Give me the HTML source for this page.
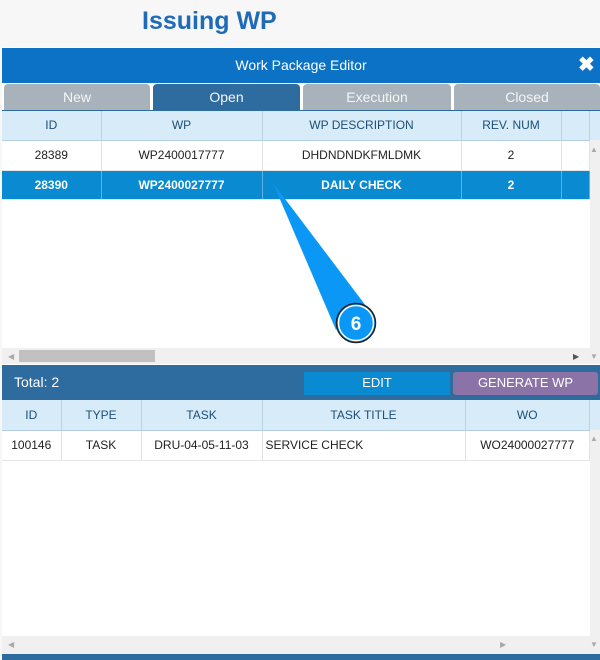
<!DOCTYPE html>
<html><head><style>
*{margin:0;padding:0;box-sizing:border-box}
body{width:600px;height:660px;background:#f7f7f7;font-family:"Liberation Sans",sans-serif;position:relative;overflow:hidden}
.a{position:absolute}
table{border-collapse:collapse;table-layout:fixed;position:absolute;font-size:12px}
td{text-align:center;border-right:1px solid #e2e2e2;border-bottom:1px solid #e6e6e6;color:#222}
th{font-weight:normal;color:#1d4f78;background:#d7ebf9;border-right:1px solid #bcd3e4;border-bottom:1px solid #b5cfe2;font-size:12px}
.sel td{background:#0a8ad0;color:#fff;font-weight:bold;border-right:1px solid #5fb2e0}
.tab{position:absolute;top:84px;height:26px;background:#a8b2ba;color:#f4f6f8;font-size:14px;text-align:center;line-height:27px;border-radius:4px 4px 0 0}
</style></head><body>
<div class="a" style="left:142px;top:7px;font-size:25px;font-weight:bold;color:#1f6bb8">Issuing WP</div>
<div class="a" style="left:2px;top:47px;width:598px;height:613px;background:#fff"></div>
<div class="a" style="left:2px;top:48px;width:598px;height:35px;background:#0b72c6;color:#fff;font-size:14px;text-align:center;line-height:35px">Work Package Editor</div>
<div class="a" style="left:578px;top:52px;color:#fff;font-size:20px;font-weight:bold">✖</div>
<div class="a" style="left:2px;top:83px;width:598px;height:28px;background:#fff"></div>
<div class="tab" style="left:4px;width:146px">New</div>
<div class="tab" style="left:153px;width:147px;background:#2e6c9f">Open</div>
<div class="tab" style="left:303px;width:148px">Execution</div>
<div class="tab" style="left:454px;width:146px">Closed</div>
<div class="a" style="left:2px;top:110px;width:598px;height:1px;background:#2e6c9f"></div>
<table style="left:2px;top:111px;width:588px">
<colgroup><col style="width:99px"><col style="width:161px"><col style="width:199px"><col style="width:100px"><col></colgroup>
<tr style="height:29px"><th>ID</th><th>WP</th><th>WP DESCRIPTION</th><th>REV. NUM</th><th></th></tr>
<tr style="height:30px"><td>28389</td><td>WP2400017777</td><td>DHDNDNDKFMLDMK</td><td>2</td><td></td></tr>
<tr class="sel" style="height:29px"><td>28390</td><td>WP2400027777</td><td>DAILY CHECK</td><td>2</td><td></td></tr>
</table>
<div class="a" style="left:590px;top:111px;width:10px;height:253px;background:#f0f0f0"></div>
<div class="a" style="left:590px;top:111px;width:10px;height:29px;background:#d7ebf9"></div>
<div class="a" style="left:2px;top:348px;width:588px;height:16px;background:#f0f0f0"></div>
<div class="a" style="left:19px;top:350px;width:136px;height:12px;background:#c1c1c1"></div>
<div class="a" style="left:8px;top:352px;font-size:8px;color:#aaa">◀</div>
<div class="a" style="left:573px;top:352px;font-size:8px;color:#555">▶</div>
<div class="a" style="left:590px;top:352px;font-size:8px;color:#aaa">▼</div>
<div class="a" style="left:590px;top:145px;font-size:8px;color:#aaa">▲</div>
<div class="a" style="left:2px;top:365px;width:598px;height:35px;background:#2e6c9f"></div>
<div class="a" style="left:14px;top:374px;color:#fff;font-size:14px">Total: 2</div>
<div class="a" style="left:304px;top:372px;width:146px;height:23px;background:#0a8ad0;color:#fff;font-size:13px;text-align:center;line-height:21px">EDIT</div>
<div class="a" style="left:453px;top:372px;width:145px;height:23px;background:#8b73a7;color:#fff;font-size:13px;text-align:center;line-height:21px;border-radius:3px">GENERATE WP</div>
<table style="left:2px;top:400px;width:588px">
<colgroup><col style="width:59px"><col style="width:80px"><col style="width:121px"><col style="width:203px"><col></colgroup>
<tr style="height:30px"><th>ID</th><th>TYPE</th><th>TASK</th><th>TASK TITLE</th><th>WO</th></tr>
<tr style="height:30px"><td>100146</td><td>TASK</td><td>DRU-04-05-11-03</td><td style="text-align:left;padding-left:3px">SERVICE CHECK</td><td>WO24000027777</td></tr>
</table>
<div class="a" style="left:590px;top:400px;width:10px;height:254px;background:#f0f0f0"></div>
<div class="a" style="left:590px;top:400px;width:10px;height:30px;background:#d7ebf9"></div>
<div class="a" style="left:590px;top:434px;font-size:8px;color:#aaa">▲</div>
<div class="a" style="left:2px;top:636px;width:588px;height:18px;background:#f0f0f0"></div>
<div class="a" style="left:8px;top:640px;font-size:8px;color:#aaa">◀</div>
<div class="a" style="left:500px;top:640px;font-size:8px;color:#aaa">▶</div>
<div class="a" style="left:590px;top:640px;font-size:8px;color:#aaa">▼</div>
<div class="a" style="left:2px;top:654px;width:598px;height:6px;background:#2e6c9f"></div>
<svg class="a" style="left:0;top:0" width="600" height="660">
<polygon points="273,183 366,306 336,330" fill="#0a97f5"/>
<circle cx="356" cy="323" r="19.5" fill="#0a97f5" stroke="#222" stroke-width="1.5"/>
<circle cx="356" cy="323" r="17.5" fill="none" stroke="#fff" stroke-width="1.5"/>
<text x="356" y="330" fill="#fff" font-family="Liberation Sans" font-weight="bold" font-size="19" text-anchor="middle">6</text>
</svg>
</body></html>
